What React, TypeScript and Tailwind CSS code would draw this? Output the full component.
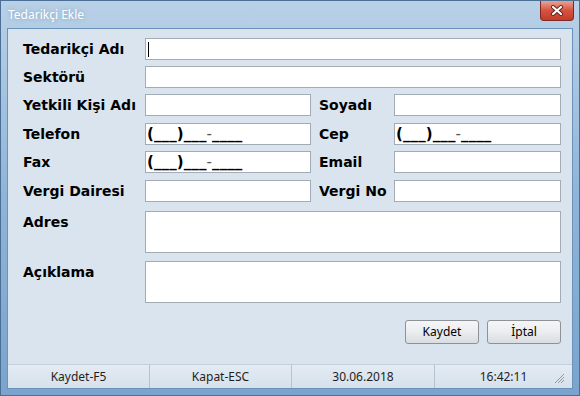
const label = 'text-[14px] font-bold leading-[22px] text-black'
const field = 'h-[22px] border border-[#a3abb4] bg-white'
const mask = 'pl-[1px] text-[15px] font-bold leading-[20px] tracking-[0.1px] text-black'

function Input({ w, children }: { w: string; children?: React.ReactNode }) {
  return <div className={`${field} ${w} flex items-center`}>{children}</div>
}

function Mask() {
  return (
    <span className={mask}>
      (___)___<span className="font-normal text-[#555]">-</span>____
    </span>
  )
}

function Row({ className, children }: { className?: string; children: React.ReactNode }) {
  return <div className={`flex ${className ?? ''}`}>{children}</div>
}

function StatusCell({ w, text, last }: { w: string; text: string; last?: boolean }) {
  return (
    <div
      className={`${w} flex h-full items-center justify-center ${last ? '' : 'border-r border-[#b7c3d0]'}`}
    >
      {text}
    </div>
  )
}

export default function App() {
  return (
    <div
      className="flex h-[396px] w-[580px] flex-col border border-[#4c6f95] bg-gradient-to-b from-[#b9d1e7] via-[#8fb4d7] to-[#7aa4cd]"
      style={{ fontFamily: '"DejaVu Sans", Verdana, sans-serif' }}
    >
      {/* title bar */}
      <div className="flex h-[27px] items-start justify-between">
        <span
          className="pl-[7px] pt-[6px] text-[12px] leading-[16px] text-white"
          style={{ fontFamily: '"Noto Sans", sans-serif', textShadow: '0 0 4px rgba(90,130,170,0.6)' }}
        >
          Tedarikçi Ekle
        </span>
        <div className="mr-[5px] flex h-[20px] w-[34px] items-center justify-center rounded-b-[4px] border border-t-0 border-[#7a2a22] bg-gradient-to-b from-[#e8a293] via-[#d5523f] to-[#c43c2a]">
          <svg width="14" height="11" viewBox="0 0 14 11">
            <path d="M3 2 L11 9 M11 2 L3 9" stroke="#5a2420" strokeWidth="4" strokeLinecap="round" />
            <path d="M3 2 L11 9 M11 2 L3 9" stroke="#ffffff" strokeWidth="2.2" strokeLinecap="round" />
          </svg>
        </div>
      </div>

      {/* client area */}
      <div className="mx-[6px] flex h-[361px] flex-col border border-[#6b92ba] bg-[#d9e4ee]">
        <div className="flex flex-col pl-[15px] pt-[9px]">
          <Row>
            <span className={`${label} w-[122px]`}>Tedarikçi Adı</span>
            <Input w="w-[416px]">
              <span className="ml-[2px] h-[15px] w-[1px] bg-black" />
            </Input>
          </Row>
          <Row className="mt-[6px]">
            <span className={`${label} w-[122px]`}>Sektörü</span>
            <Input w="w-[416px]" />
          </Row>
          <Row className="mt-[6px]">
            <span className={`${label} w-[122px]`}>Yetkili Kişi Adı</span>
            <Input w="w-[166px]" />
            <span className={`${label} ml-[8px] w-[75px]`}>Soyadı</span>
            <Input w="w-[167px]" />
          </Row>
          <Row className="mt-[7px]">
            <span className={`${label} w-[122px]`}>Telefon</span>
            <Input w="w-[166px]">
              <Mask />
            </Input>
            <span className={`${label} ml-[8px] w-[75px]`}>Cep</span>
            <Input w="w-[167px]">
              <Mask />
            </Input>
          </Row>
          <Row className="mt-[6px]">
            <span className={`${label} w-[122px]`}>Fax</span>
            <Input w="w-[166px]">
              <Mask />
            </Input>
            <span className={`${label} ml-[8px] w-[75px]`}>Email</span>
            <Input w="w-[167px]" />
          </Row>
          <Row className="mt-[7px]">
            <span className={`${label} w-[122px]`}>Vergi Dairesi</span>
            <Input w="w-[166px]" />
            <span className={`${label} ml-[8px] w-[75px]`}>Vergi No</span>
            <Input w="w-[167px]" />
          </Row>
          <Row className="mt-[9px]">
            <span className={`${label} w-[122px]`}>Adres</span>
            <div className="h-[42px] w-[416px] border border-[#a3abb4] bg-white" />
          </Row>
          <Row className="mt-[8px]">
            <span className={`${label} w-[122px]`}>Açıklama</span>
            <div className="h-[42px] w-[416px] border border-[#a3abb4] bg-white" />
          </Row>
          <div
            className="mt-[17px] flex w-[538px] justify-end gap-[8px] text-[12px] text-black"
            style={{ fontFamily: '"Noto Sans", sans-serif' }}
          >
            <button className="h-[24px] w-[74px] rounded-[3px] border border-[#8e9297] bg-gradient-to-b from-[#f5f6f7] via-[#ebedef] to-[#d9dde1]">
              Kaydet
            </button>
            <button className="h-[24px] w-[74px] rounded-[3px] border border-[#8e9297] bg-gradient-to-b from-[#f5f6f7] via-[#ebedef] to-[#d9dde1]">
              İptal
            </button>
          </div>
        </div>

        {/* status bar */}
        <div
          className="relative mt-auto flex h-[24px] border-t border-[#c3ceda] bg-gradient-to-b from-[#e3ebf3] to-[#d6e1ec] text-[12px] text-[#1e1e1e]"
          style={{ fontFamily: '"Noto Sans", sans-serif' }}
        >
          <StatusCell w="w-[142px]" text="Kaydet-F5" />
          <StatusCell w="w-[142px]" text="Kapat-ESC" />
          <StatusCell w="w-[143px]" text="30.06.2018" />
          <StatusCell w="w-[137px]" text="16:42:11" last />
          <svg className="absolute bottom-[4px] right-[7px]" width="11" height="11" viewBox="0 0 11 11">
            <path d="M10 1 L1 10 M10 4 L4 10 M10 7 L7 10" stroke="#8f9aa6" strokeWidth="1" />
          </svg>
        </div>
      </div>
    </div>
  )
}
